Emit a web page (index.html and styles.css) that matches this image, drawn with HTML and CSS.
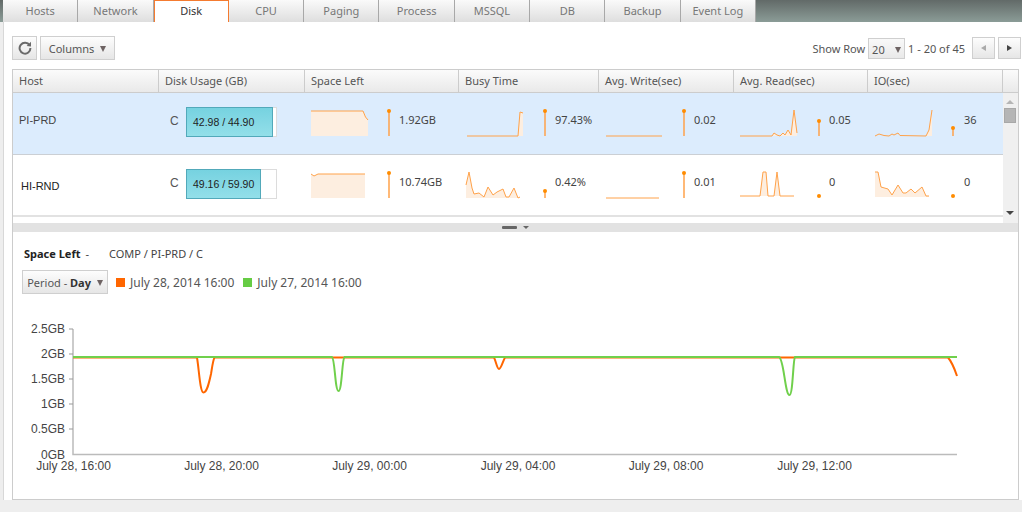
FILE: index.html
```html
<!DOCTYPE html>
<html lang="en">
<head>
    <meta charset="UTF-8">
    <title>Disk</title>
    <link rel="stylesheet" href="styles.css">
</head>
<body>
    <nav class="tabs">
        <a class="tab">Hosts</a>
        <a class="tab">Network</a>
        <a class="tab active">Disk</a>
        <a class="tab">CPU</a>
        <a class="tab">Paging</a>
        <a class="tab">Process</a>
        <a class="tab">MSSQL</a>
        <a class="tab">DB</a>
        <a class="tab">Backup</a>
        <a class="tab">Event Log</a>
    </nav>

    <main class="main">
        <div class="toolbar">
            <button class="btn btn-refresh" aria-label="Refresh">
                <svg width="14" height="14" viewBox="0 0 14 14">
                    <path d="M11.6 4.4A5.4 5.4 0 1 0 12.4 7" fill="none" stroke="#6a6a6a" stroke-width="2"/>
                    <path d="M8.6 4.9L13 5.4V0.8Z" fill="#6a6a6a"/>
                </svg>
            </button>
            <button class="btn btn-columns">Columns <span class="caret"></span></button>
            <div class="pager">
                <span class="pager-label">Show Row</span>
                <div class="select">20 <span class="caret"></span></div>
                <span class="pager-count">1 - 20 of 45</span>
                <button class="btn btn-page" aria-label="Previous"><span class="arrow arrow-left off"></span></button>
                <button class="btn btn-page" aria-label="Next"><span class="arrow arrow-right"></span></button>
            </div>
        </div>

        <section class="panel">
            <div class="grid-head">
                <div class="th">Host</div>
                <div class="th">Disk Usage (GB)</div>
                <div class="th">Space Left</div>
                <div class="th">Busy Time</div>
                <div class="th">Avg. Write(sec)</div>
                <div class="th">Avg. Read(sec)</div>
                <div class="th">IO(sec)</div>
                <div class="th"></div>
            </div>

            <div class="grid-body">
                <div class="rows">
                    <div class="row selected">
                        <div class="td host">PI-PRD</div>
                        <div class="td usage">
                            <span class="drive">C</span>
                            <div class="bar"><div class="bar-fill" style="width: 87px"></div><span class="bar-text">42.98 / 44.90</span></div>
                        </div>
                        <div class="td spark-cell">
                            <svg class="spark w94" viewBox="0 0 94 61">
                                <polygon class="area" points="6,18 58,18 63,27 63,43 6,43"/>
                                <polyline class="line" points="6,18 58,18 60.5,24 63,27"/>
                                <path class="mark" d="M84 18V43"/><circle class="dot" cx="84" cy="18" r="2"/>
                            </svg>
                            <span class="val">1.92GB</span>
                        </div>
                        <div class="td spark-cell">
                            <svg class="spark w96" viewBox="0 0 96 61">
                                <polygon class="area" points="59,43 61,19 64,20 64,43"/>
                                <polyline class="line" points="8,43 59,43 61,19 64,20"/>
                                <path class="mark" d="M86 18V43"/><circle class="dot" cx="86" cy="18" r="2"/>
                            </svg>
                            <span class="val">97.43%</span>
                        </div>
                        <div class="td spark-cell">
                            <svg class="spark w95" viewBox="0 0 95 61">
                                <polyline class="line" points="7,43 63,43"/>
                                <path class="mark" d="M85 18V43"/><circle class="dot" cx="85" cy="18" r="2"/>
                            </svg>
                            <span class="val">0.02</span>
                        </div>
                        <div class="td spark-cell">
                            <svg class="spark w95" viewBox="0 0 95 61">
                                <polygon class="area" points="38,43 40,40 43,42 46,43 49,40 51,42 54,37 57,42 60,17 63,40 63,43"/>
                                <polyline class="line" points="6,43 38,43 40,40 43,42 46,43 49,40 51,42 54,37 57,42 60,17 63,40"/>
                                <path class="mark" d="M85 28V43"/><circle class="dot" cx="85" cy="28" r="2"/>
                            </svg>
                            <span class="val">0.05</span>
                        </div>
                        <div class="td spark-cell">
                            <svg class="spark w96" viewBox="0 0 96 61">
                                <polygon class="area" points="58,43 61,37 64,17 64,43"/>
                                <polyline class="line" points="7,43 11,41 16,42.5 21,43 24,41 26,42 30,40 32,42.5 58,43 61,37 64,17"/>
                                <path class="mark" d="M85 35V43"/><circle class="dot" cx="85" cy="35" r="2"/>
                            </svg>
                            <span class="val">36</span>
                        </div>
                    </div>

                    <div class="row last">
                        <div class="td host host-alt">HI-RND</div>
                        <div class="td usage">
                            <span class="drive">C</span>
                            <div class="bar"><div class="bar-fill" style="width: 75px"></div><span class="bar-text">49.16 / 59.90</span></div>
                        </div>
                        <div class="td spark-cell">
                            <svg class="spark w94" viewBox="0 0 94 61">
                                <polygon class="area" points="6,19 9,21 13,19 60,19 60,43 6,43"/>
                                <polyline class="line" points="6,19 9,21 13,19 60,19"/>
                                <path class="mark" d="M84 18V43"/><circle class="dot" cx="84" cy="18" r="2"/>
                            </svg>
                            <span class="val">10.74GB</span>
                        </div>
                        <div class="td spark-cell">
                            <svg class="spark w96" viewBox="0 0 96 61">
                                <polygon class="area" points="7,30 10,17 13,33 15,39 20,38 25,42 29,32 34,40 38,37 44,34 47,42 50,42 55,33 59,43 61,42 61,43 7,43"/>
                                <polyline class="line" points="7,30 10,17 13,33 15,39 20,38 25,42 29,32 34,40 38,37 44,34 47,42 50,42 55,33 59,43 61,42"/>
                                <path class="mark" d="M86 36V43"/><circle class="dot" cx="86" cy="36" r="2"/>
                            </svg>
                            <span class="val">0.42%</span>
                        </div>
                        <div class="td spark-cell">
                            <svg class="spark w95" viewBox="0 0 95 61">
                                <polyline class="line" points="7,43 60,43"/>
                                <path class="mark" d="M85 18V43"/><circle class="dot" cx="85" cy="18" r="2"/>
                            </svg>
                            <span class="val">0.01</span>
                        </div>
                        <div class="td spark-cell">
                            <svg class="spark w95" viewBox="0 0 95 61">
                                <polygon class="area" points="26,41 29,17 32,17 34,41"/>
                                <polygon class="area" points="40,41 43,17 46,41"/>
                                <polyline class="line" points="6,41 26,41 29,17 32,17 34,41 40,41 43,17 46,41 60,41"/>
                                <circle class="dot" cx="85" cy="41" r="2"/>
                            </svg>
                            <span class="val">0</span>
                        </div>
                        <div class="td spark-cell">
                            <svg class="spark w96" viewBox="0 0 96 61">
                                <polygon class="area" points="7,17 10,17 13,32 20,34 24,40 30,30 35,38 38,38 43,34 47,38 54,32 58,41 61,41 61,42 7,42"/>
                                <polyline class="line" points="7,17 10,17 13,32 20,34 24,40 30,30 35,38 38,38 43,34 47,38 54,32 58,41 61,41"/>
                                <circle class="dot" cx="85" cy="41" r="2"/>
                            </svg>
                            <span class="val">0</span>
                        </div>
                    </div>
                </div>

                <div class="scrollbar">
                    <span class="scroll-up"></span>
                    <span class="scroll-thumb"></span>
                    <span class="scroll-down"></span>
                </div>
            </div>

            <div class="splitter"><span class="grip"></span><span class="grip-caret"></span></div>

            <div class="detail">
                <div class="detail-title">
                    <strong>Space Left</strong><span class="dash">-</span><span class="crumb">COMP / PI-PRD / C</span>
                </div>
                <div class="detail-controls">
                    <button class="btn btn-period">Period - <b>Day</b> <span class="caret"></span></button>
                    <span class="legend"><i class="swatch orange"></i>July 28, 2014 16:00</span>
                    <span class="legend"><i class="swatch green"></i>July 27, 2014 16:00</span>
                </div>

                <svg class="chart" width="1004" height="180" viewBox="13 300 1004 180">
                    <path class="axis" d="M73 328V453.5H957"/>
                    <path class="tick" d="M69 328H73M69 353H73M69 378H73M69 403H73M69 428H73"/>
                    <g class="y-labels">
                        <text x="65" y="332">2.5GB</text>
                        <text x="65" y="357">2GB</text>
                        <text x="65" y="382">1.5GB</text>
                        <text x="65" y="407">1GB</text>
                        <text x="65" y="432">0.5GB</text>
                        <text x="65" y="458">0GB</text>
                    </g>
                    <g class="x-labels">
                        <text x="73.5" y="469">July 28, 16:00</text>
                        <text x="221.5" y="469">July 28, 20:00</text>
                        <text x="369.5" y="469">July 29, 00:00</text>
                        <text x="518" y="469">July 29, 04:00</text>
                        <text x="666" y="469">July 29, 08:00</text>
                        <text x="814.5" y="469">July 29, 12:00</text>
                    </g>
                    <path class="series-orange" d="M73 356.5H197C199 368 200 391.5 203.500 391.500C207 391.500 209 382 211 373C212 367 213 359 214.500 356.500H494C496 360 497 368 499 368C501 368 503 360 505 356.500H948C951 360 954 366 957 375"/>
                    <path class="series-green" d="M73 356H332C335 358 335 390 338.500 390C342 390 342 358 344.500 356H779C784 358 785 394 789.500 394C793 394 793 358 795 356H957"/>
                </svg>
            </div>
        </section>
    </main>
</body>
</html>
```

FILE: styles.css
```css
* {
    box-sizing: border-box;
}
body {
    margin: 0;
    height: 512px;
    overflow: hidden;
    background-color: #eeeeee;
    font-family: "Noto Sans", Arial, sans-serif;
    font-size: 11px;
    color: #555;
}

/* top tabs */
.tabs {
    display: flex;
    height: 22px;
    padding-left: 3px;
    background: linear-gradient(#626a68, #8b9c97);
}
.tab {
    width: 75.3px;
    height: 22px;
    line-height: 22px;
    text-align: center;
    color: #777;
    background: linear-gradient(#fafafa, #dedede);
    border-right: 1px solid #a8a8a8;
}
.tab.active {
    color: #333;
    background: #fff;
    border: 1px solid #f47b30;
    border-bottom: none;
    line-height: 20px;
}

.main {
    width: 1019px;
    height: 478px;
    margin-left: 3px;
    padding: 14px 0 0 8px;
    background: #fff;
    border-left: 1px solid #d8d8d8;
}

/* toolbar */
.toolbar {
    display: flex;
    align-items: center;
    height: 24px;
    margin-bottom: 9px;
}
.btn {
    height: 24px;
    padding: 0;
    font-family: inherit;
    font-size: 11px;
    color: #555;
    background: linear-gradient(#fdfdfd, #e6e6e6);
    border: 1px solid #cfcfcf;
}
.btn-refresh {
    display: flex;
    align-items: center;
    justify-content: center;
    width: 25px;
    margin-right: 3px;
}
.btn-columns {
    width: 75px;
}
.caret {
    display: inline-block;
    margin-left: 3px;
    vertical-align: 1px;
    border-left: 3.5px solid transparent;
    border-right: 3.5px solid transparent;
    border-top: 6px solid #6e6363;
}
.pager {
    display: flex;
    align-items: center;
    margin-left: auto;
    margin-right: 1px;
}
.pager-label {
    margin-right: 3px;
}
.select {
    width: 37px;
    height: 21px;
    padding-left: 3px;
    line-height: 21px;
    background: linear-gradient(#f9f9f9, #e9e9e9);
    border: 1px solid #cfcfcf;
}
.select .caret {
    margin-left: 7px;
}
.pager-count {
    margin: 0 4px 0 3px;
}
.btn-page {
    display: flex;
    align-items: center;
    justify-content: center;
    width: 23px;
    height: 22px;
    margin-left: 3px;
}
.arrow {
    border-top: 3.5px solid transparent;
    border-bottom: 3.5px solid transparent;
}
.arrow-left {
    border-right: 5px solid #555;
}
.arrow-left.off {
    border-right-color: #aaa;
}
.arrow-right {
    border-left: 5px solid #444;
}

/* main panel */
.panel {
    width: 1007px;
    height: 431px;
    border: 1px solid #cccccc;
}
.grid-head {
    display: grid;
    grid-template-columns: 146px 146px 154px 140px 135px 134px 135px 1fr;
    height: 23px;
    background: linear-gradient(#fbfbfb, #e9e9e9);
    border-bottom: 1px solid #cccccc;
}
.th {
    padding-left: 6px;
    line-height: 22px;
    border-right: 1px solid #cccccc;
}
.th:last-child {
    border-right: none;
}
.grid-body {
    display: flex;
    height: 130px;
}
.rows {
    flex: 1;
}
.row {
    display: grid;
    grid-template-columns: 146px 146px 154px 140px 135px 134px 135px;
    height: 62px;
    border-bottom: 1px solid #cbcfd4;
}
.row.selected {
    background: #dcecfd;
}
.row.last {
    border-bottom: 2px solid #e2e2e2;
}
.td {
    display: flex;
}
.host {
    padding: 21px 0 0 6px;
    font-family: "Liberation Sans", Arial, sans-serif;
    font-size: 11px;
    color: #444;
}
.host-alt {
    padding: 25px 0 0 8px;
    color: #222;
}
.usage {
    padding-top: 14px;
    padding-left: 11px;
}
.drive {
    width: 16px;
    padding-top: 7px;
    font-family: "Liberation Sans", Arial, sans-serif;
    font-size: 12px;
}
.bar {
    position: relative;
    width: 91px;
    height: 30px;
    background: #fff;
    border: 1px solid #dcdcdc;
}
.bar-fill {
    position: absolute;
    top: -1px;
    left: -1px;
    bottom: -1px;
    background: linear-gradient(#76d2e0, #93dfe9);
    border: 1px solid #52a9ba;
}
.bar-text {
    position: absolute;
    top: 0;
    left: 6px;
    line-height: 28px;
    font-family: "Liberation Sans", Arial, sans-serif;
    font-size: 10.5px;
    color: #222;
}

/* sparklines */
.spark {
    display: block;
    flex: none;
    height: 61px;
}
.w94 {
    width: 94px;
}
.w95 {
    width: 95px;
}
.w96 {
    width: 96px;
}
.val {
    padding-top: 19px;
    color: #444;
}
.area {
    fill: #fdeee0;
}
.line {
    fill: none;
    stroke: #ffa24a;
    stroke-width: 1;
}
.mark {
    stroke: #ffa24a;
    stroke-width: 1.5;
}
.dot {
    fill: #ff8c00;
}

.scrollbar {
    position: relative;
    width: 15px;
    background: #f0f0f0;
}
.scroll-up,
.scroll-down {
    position: absolute;
    left: 3px;
    border-left: 4px solid transparent;
    border-right: 4px solid transparent;
}
.scroll-up {
    top: 7px;
    border-bottom: 4px solid #b5b5b5;
}
.scroll-down {
    bottom: 8px;
    border-top: 4px solid #444;
}
.scroll-thumb {
    position: absolute;
    top: 15px;
    left: 1px;
    width: 12px;
    height: 15px;
    background: #b5b5b5;
    border: 1px solid #a8a8a8;
}

.splitter {
    display: flex;
    align-items: center;
    justify-content: center;
    gap: 6px;
    height: 9px;
    background: #e2e2e2;
}
.grip {
    width: 15px;
    height: 3px;
    background: #666;
    border-radius: 1px;
}
.grip-caret {
    border-left: 3px solid transparent;
    border-right: 3px solid transparent;
    border-top: 3px solid #666;
}

/* lower chart */
.detail {
    height: 267px;
}
.detail-title {
    display: flex;
    padding: 14px 0 0 11px;
    height: 38px;
    color: #444;
}
.detail-title strong {
    color: #222;
}
.dash {
    margin-left: 5px;
}
.crumb {
    margin-left: 20px;
}
.detail-controls {
    display: flex;
    align-items: center;
    height: 24px;
    padding-left: 9px;
}
.btn-period {
    width: 86px;
    margin-right: 8px;
}
.btn-period b {
    color: #333;
}
.legend {
    display: flex;
    align-items: center;
    margin-right: 9px;
    font-size: 12px;
}
.swatch {
    width: 9px;
    height: 9px;
    margin-right: 5px;
}
.swatch.orange {
    background: #ff6600;
}
.swatch.green {
    background: #66cc44;
}
.chart {
    display: block;
    margin-top: 7px;
}
.axis {
    fill: none;
    stroke: #bbbbbb;
    stroke-width: 1.5;
}
.tick {
    stroke: #999;
    stroke-width: 1;
}
.chart text {
    font-family: "Liberation Sans", Arial, sans-serif;
    font-size: 12px;
    fill: #444;
}
.y-labels text {
    text-anchor: end;
}
.x-labels text {
    text-anchor: middle;
}
.series-orange,
.series-green {
    fill: none;
    stroke-width: 2;
}
.series-orange {
    stroke: #ff6600;
}
.series-green {
    stroke: #70d04c;
}
```
